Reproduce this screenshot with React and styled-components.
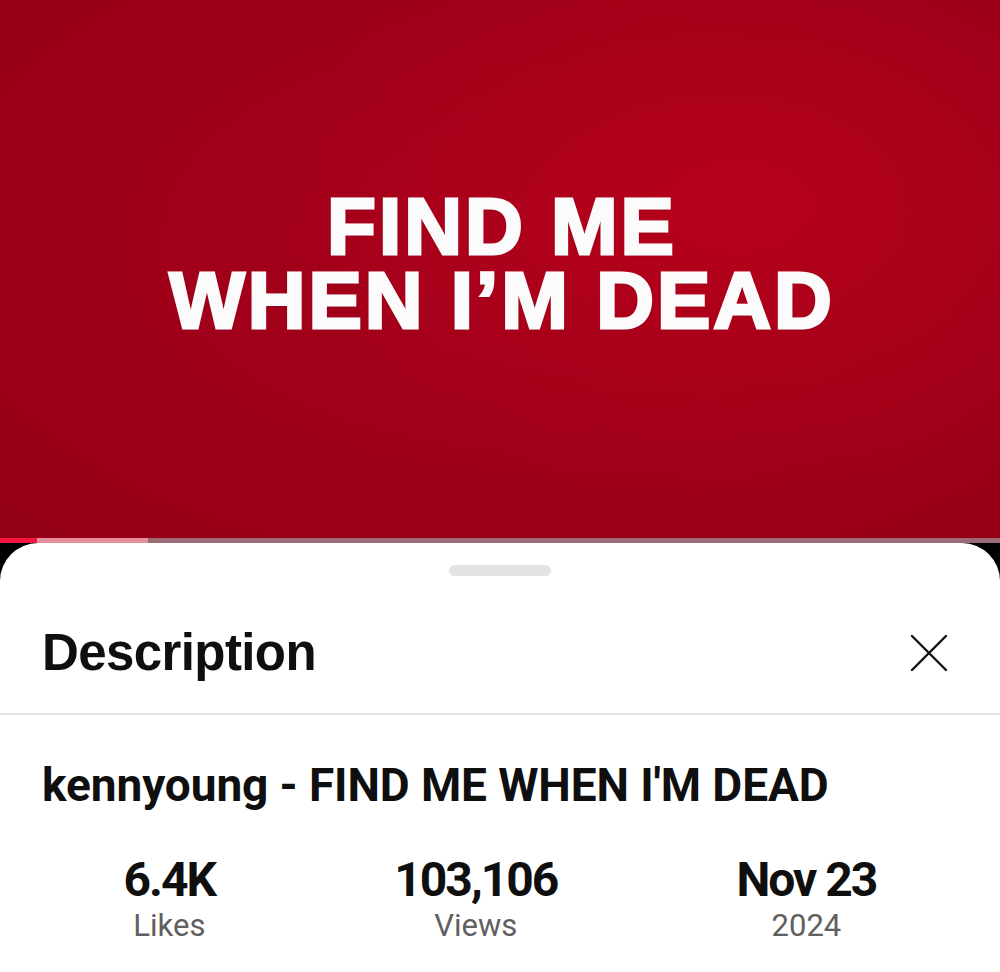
import React from "react";
import styled, { createGlobalStyle } from "styled-components";

const Global = createGlobalStyle`
  html, body { margin: 0; padding: 0; background: #000; }
  body { font-family: "Liberation Sans", Arial, sans-serif; overflow: hidden; }
  * { box-sizing: border-box; }
`;

const Page = styled.div`
  width: 1000px;
  height: 972px;
  display: flex;
  flex-direction: column;
  background: #000;
  overflow: hidden;
`;

const Video = styled.div`
  height: 538px;
  flex: none;
  display: flex;
  flex-direction: column;
  align-items: center;
  justify-content: center;
  background:
    radial-gradient(ellipse 55% 65% at 74% 38%, rgba(186, 2, 28, 0.85) 0%, rgba(176, 0, 26, 0.45) 50%, rgba(160, 0, 24, 0) 85%),
    radial-gradient(ellipse 100% 100% at 55% 45%, #a8001b 0%, #9c0018 55%, #880015 100%);
`;

const VideoLine = styled.div`
  color: #fbfbfb;
  font-family: "Liberation Sans", Arial, sans-serif;
  font-weight: 700;
  font-size: 80px;
  height: 74px;
  line-height: 74px;
  letter-spacing: 3px;
  text-align: center;
  white-space: nowrap;
  -webkit-text-stroke: 3px #fbfbfb;
  text-shadow: 0 1px 3px rgba(60, 0, 10, 0.45);
  margin-left: 4px;
  &:first-child { margin-top: -10px; }
`;

const Progress = styled.div`
  height: 5px;
  flex: none;
  display: flex;
  background: #9c6b75;
`;

const Seg = styled.div`
  height: 100%;
  width: ${(p) => p.$w}px;
  background: ${(p) => p.$c};
`;

const Sheet = styled.div`
  flex: 1;
  background: #fff;
  border-radius: 38px 38px 0 0;
  display: flex;
  flex-direction: column;
`;

const Handle = styled.div`
  align-self: center;
  width: 102px;
  height: 11px;
  border-radius: 6px;
  background: #e3e3e3;
  margin-top: 22px;
`;

const Header = styled.div`
  display: flex;
  align-items: center;
  justify-content: space-between;
  padding: 0 52px 30px 42px;
  margin-top: 46px;
  border-bottom: 2px solid #e6e6e6;
`;

const HeaderTitle = styled.h1`
  margin: 0;
  font-family: "Liberation Sans", Arial, sans-serif;
  font-weight: 700;
  font-size: 51px;
  line-height: 1.2;
  letter-spacing: -0.6px;
  color: #0f0f0f;
`;

const CloseBtn = styled.button`
  border: 0;
  background: none;
  padding: 0;
  width: 38px;
  height: 38px;
  display: flex;
  align-items: center;
  justify-content: center;
`;

const Title = styled.div`
  margin: 43px 0 0 42px;
  font-family: Roboto, "Liberation Sans", sans-serif;
  font-weight: 700;
  font-size: 46px;
  line-height: 1.2;
  letter-spacing: -0.1px;
  color: #0f0f0f;
`;

const Stats = styled.div`
  display: flex;
  padding: 0 34px;
  margin-top: 38px;
`;

const Stat = styled.div`
  flex: 1 1 auto;
  display: flex;
  flex-direction: column;
  align-items: center;
`;

const Value = styled.div`
  font-family: Roboto, "Liberation Sans", sans-serif;
  font-weight: 700;
  font-size: 48px;
  line-height: 1.2;
  letter-spacing: -2px;
  color: #0f0f0f;
`;

const Label = styled.div`
  font-family: Roboto, "Liberation Sans", sans-serif;
  font-weight: 400;
  font-size: 31px;
  line-height: 1.2;
  margin-top: -2px;
  color: #606060;
`;

export default function App() {
  const stats = [
    ["6.4K", "Likes"],
    ["103,106", "Views"],
    ["Nov 23", "2024"],
  ];
  return (
    <>
      <Global />
      <Page>
        <Video>
          <VideoLine>FIND ME</VideoLine>
          <VideoLine>WHEN I’M DEAD</VideoLine>
        </Video>
        <Progress>
          <Seg $w={37} $c="#f4163f" />
          <Seg $w={111} $c="#e48f99" />
        </Progress>
        <Sheet>
          <Handle />
          <Header>
            <HeaderTitle>Description</HeaderTitle>
            <CloseBtn aria-label="Close">
              <svg width="38" height="38" viewBox="0 0 38 38">
                <path d="M2 2 L36 36 M36 2 L2 36" stroke="#0f0f0f" strokeWidth="2.4" strokeLinecap="round" />
              </svg>
            </CloseBtn>
          </Header>
          <Title>kennyoung - FIND ME WHEN I'M DEAD</Title>
          <Stats>
            {stats.map(([v, l]) => (
              <Stat key={v}>
                <Value>{v}</Value>
                <Label>{l}</Label>
              </Stat>
            ))}
          </Stats>
        </Sheet>
      </Page>
    </>
  );
}
